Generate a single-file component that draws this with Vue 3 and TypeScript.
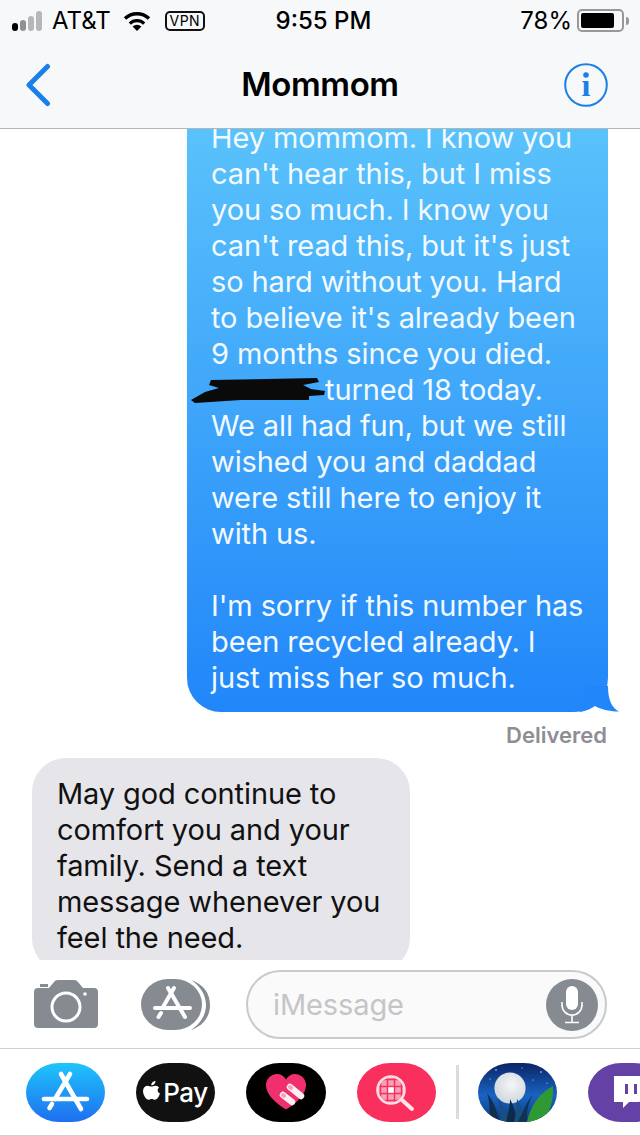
<script setup lang="ts">
const sentLines: string[] = [
  "Hey mommom. I know you",
  "can't hear this, but I miss",
  "you so much. I know you",
  "can't read this, but it's just",
  "so hard without you. Hard",
  "to believe it's already been",
  "9 months since you died.",
]
const sentAfter: string[] = [
  "We all had fun, but we still",
  "wished you and daddad",
  "were still here to enjoy it",
  "with us.",
  "\u00a0",
  "I'm sorry if this number has",
  "been recycled already. I",
  "just miss her so much.",
]
const receivedLines: string[] = [
  "May god continue to",
  "comfort you and your",
  "family. Send a text",
  "message whenever you",
  "feel the need.",
]
</script>

<template>
  <div class="phone">
    <header class="header">
      <div class="status">
        <div class="status-left">
          <div class="signal">
            <i class="b1"></i><i class="b2"></i><i class="b3"></i><i class="b4"></i>
          </div>
          <span class="carrier">AT&amp;T</span>
          <svg class="wifi" width="28" height="20" viewBox="0 0 28 20">
            <path d="M14 20l-4.400-4.600a6.400 6.400 0 0 1 8.800 0z" fill="#000" />
            <path d="M6.800 12.600a10.400 10.400 0 0 1 14.400 0" fill="none" stroke="#000" stroke-width="3.200" />
            <path d="M2 7.600a17.400 17.400 0 0 1 24 0" fill="none" stroke="#000" stroke-width="3.400" />
          </svg>
          <span class="vpn">VPN</span>
        </div>
        <span class="clock">9:55 PM</span>
        <div class="status-right">
          <span class="pct">78%</span>
          <div class="battery"><div class="charge"></div></div>
          <div class="nub"></div>
        </div>
      </div>
      <nav class="nav">
        <svg class="nav-back" width="26" height="44" viewBox="0 0 26 44">
          <path d="M22.500 3.500L4 22l18.500 18.500" fill="none" stroke="#1a7fe6" stroke-width="5" stroke-linecap="round" stroke-linejoin="round" />
        </svg>
        <h1 class="title">Mommom</h1>
        <svg class="nav-info" width="44" height="44" viewBox="0 0 44 44">
          <circle cx="22" cy="22" r="20.800" fill="none" stroke="#1a7fe6" stroke-width="2" />
          <circle cx="22" cy="12" r="2.800" fill="#1a7fe6" />
          <text x="22" y="33" text-anchor="middle" class="info-i">ı</text>
        </svg>
      </nav>
    </header>

    <main class="thread">
      <div class="sent">
        <div v-for="line in sentLines" :key="line" class="line">{{ line }}</div>
        <div class="line">
          <span class="redact">
            <svg width="135" height="27" viewBox="0 0 135 27">
              <path d="M20 3L126 1L128 5L112 8L120 12L134 14L133 18L118 19L118 23L50 23L4 26L0 23L14 15L28 11L18 8Z" fill="#0a0a0a" />
            </svg>
          </span>turned 18 today.
        </div>
        <div v-for="(line, i) in sentAfter" :key="i" class="line">{{ line }}</div>
        <svg class="tail" width="34" height="26" viewBox="0 0 34 26">
          <path d="M0 0H22C22 14 26 22 33 25.500C25 25.500 16 24 9 20C5 23 0 25 -6 26Z" fill="#2186f9" />
        </svg>
      </div>
      <div class="delivered">Delivered</div>
      <div class="received">
        <div v-for="line in receivedLines" :key="line" class="line">{{ line }}</div>
      </div>
    </main>

    <section class="composer">
      <svg class="camera" width="64" height="48" viewBox="0 0 64 48">
        <path d="M6 4h8v3H6z" fill="#868b92" />
        <path d="M4 8H15L20 2Q21 0 24 0H40Q43 0 44 2L49 8H60Q64 8 64 12V44Q64 48 60 48H4Q0 48 0 44V12Q0 8 4 8Z" fill="#868b92" />
        <circle cx="32" cy="27" r="14" fill="#868b92" stroke="#fff" stroke-width="3" />
        <circle cx="51" cy="14" r="1.800" fill="#fff" />
      </svg>
      <div class="store-btn">
        <svg width="70" height="54" viewBox="0 0 70 54">
          <path d="M50 2C62 6 69 15 69 27C69 39 62 48 50 52C58 47 65 38 65 27C65 16 58 7 50 2Z" fill="#868b92" />
          <rect x="0" y="1" width="61" height="51" rx="27" ry="25.500" fill="#868b92" />
          <g fill="none" stroke="#fff" stroke-width="4" stroke-linecap="round">
            <path d="M27 10L44 39" />
            <path d="M33 10L22 29" />
            <path d="M14 30H49" />
            <path d="M20 35L17.500 39" />
          </g>
        </svg>
      </div>
      <div class="input">
        <span class="placeholder">iMessage</span>
        <div class="mic">
          <svg width="24" height="38" viewBox="0 0 24 38">
            <rect x="6" y="0" width="12" height="24" rx="6" fill="#fff" />
            <path d="M2 16V19A10 10 0 0 0 22 19V16M12 29V36M5 36.500H19" fill="none" stroke="#fff" stroke-width="1.600" />
          </svg>
        </div>
      </div>
    </section>

    <section class="apps">
      <div class="app app-store">
        <svg width="79" height="59" viewBox="0 0 79 59">
          <g fill="none" stroke="#fff" stroke-width="4.600" stroke-linecap="round">
            <path d="M35 11L55 46" />
            <path d="M44 11L29 36" />
            <path d="M18 36H61" />
            <path d="M26 41L23.500 45" />
          </g>
        </svg>
      </div>
      <div class="app app-pay">
        <svg width="17" height="20" viewBox="0 0 17 20">
          <path d="M12.500 0C12.600 2.300 10.600 4.500 8.300 4.300C8.100 2.100 10.300 0.100 12.500 0ZM8.500 5.500C9.600 5.500 10.800 4.600 12.500 4.700C14 4.800 15.300 5.500 16.100 6.700C14 8 14.300 11.300 17 12.400C16.300 14.500 14.500 18 12.700 18.600C11.200 19 10.400 17.900 8.700 17.900C7 17.900 6.200 19 4.800 18.600C2.500 17.800 0 13.500 0 10C0 6.800 2 4.800 4.300 4.700C6 4.700 7.400 5.500 8.500 5.500Z" fill="#fff" />
        </svg>
        <span>Pay</span>
      </div>
      <div class="app app-heart">
        <svg width="40" height="36" viewBox="0 0 40 36">
          <path d="M20 35.500C8 28 0 20 0 11C0 5 5 0 11 0C15 0 18 2 20 5.500C22 2 25 0 29 0C35 0 40 5 40 11C40 20 32 28 20 35.500Z" fill="#f0306c" />
          <g stroke="#fdf0f4" stroke-width="6.500" stroke-linecap="round">
            <path d="M17 21L26 28" />
            <path d="M24 13L35 22" />
          </g>
          <g stroke="#f7a0ba" stroke-width="4" stroke-linecap="round">
            <path d="M17 21L18 21.800" />
            <path d="M24 13L25 13.800" />
          </g>
        </svg>
      </div>
      <div class="app app-search">
        <svg width="79" height="59" viewBox="0 0 79 59">
          <defs>
            <clipPath id="lens"><circle cx="34" cy="27" r="12.500" /></clipPath>
          </defs>
          <circle cx="34" cy="27" r="12.500" fill="#f8a0b5" />
          <g clip-path="url(#lens)" stroke="#f9305d" stroke-width="1.500" fill="none">
            <path d="M20 16.500H48M20 23.500H48M20 30.500H48M20 37.500H48" />
            <path d="M23.500 13V41M30.500 13V41M37.500 13V41M44.500 13V41" />
          </g>
          <path d="M31.300 24.300h5.400v5.400h-5.400z" fill="#fff" />
          <circle cx="34" cy="27" r="13.500" fill="none" stroke="#ffdde5" stroke-width="2.600" />
          <path d="M45 37L55 46" stroke="#ffe6ec" stroke-width="4" stroke-linecap="round" />
        </svg>
      </div>
      <div class="divider"></div>
      <div class="app app-moon">
        <svg width="79" height="59" viewBox="0 0 79 59">
          <defs>
            <linearGradient id="night" x1="0" y1="0" x2="0" y2="1">
              <stop offset="0" stop-color="#0a2466" />
              <stop offset=".55" stop-color="#1a63c2" />
              <stop offset="1" stop-color="#0d3a80" />
            </linearGradient>
            <radialGradient id="moonFill" cx=".55" cy=".4" r=".65">
              <stop offset="0" stop-color="#f5f6f6" />
              <stop offset="1" stop-color="#cdd5dc" />
            </radialGradient>
          </defs>
          <rect width="79" height="59" fill="url(#night)" />
          <g fill="#cfe2ff">
            <circle cx="18" cy="7" r=".8" />
            <circle cx="44" cy="5" r=".6" />
            <circle cx="63" cy="9" r=".8" />
            <circle cx="55" cy="17" r=".6" />
            <circle cx="12" cy="16" r=".6" />
            <circle cx="69" cy="20" r=".6" />
          </g>
          <circle cx="32" cy="25" r="15.600" fill="url(#moonFill)" />
          <path d="M49 59C52 44 60 31 75 23C76 36 72 50 64 59Z" fill="#2f9a35" />
          <path d="M0 42C5 47 9 52 12 59H0Z" fill="#2d8a36" />
          <path d="M9 30C15 38 20 48 21 59H11C12 49 12 39 9 30Z" fill="#102f4f" />
          <path d="M20 35C25 42 29 50 30 59H22C23 51 22 43 20 35Z" fill="#17507f" />
          <path d="M32 36C36 43 38 51 38 59H28C30 52 32 44 32 36Z" fill="#0d2a46" />
          <path d="M39 36C43 42 45 50 45 59H36C38 52 39 44 39 36Z" fill="#17507f" />
          <path d="M55 31C50 40 48 50 49 59H40C44 50 49 39 55 31Z" fill="#0f3350" />
        </svg>
      </div>
      <div class="app app-twitch">
        <svg width="34" height="32" viewBox="0 0 34 32">
          <path d="M2 0H34V22L27 26H17L11 32V26H2Z" fill="#fff" />
          <path d="M13 8h3v10h-3zM22 8h3v10h-3z" fill="#6441a4" />
        </svg>
      </div>
    </section>
  </div>
</template>

<style scoped>
.phone {
  width: 640px;
  height: 1136px;
  display: flex;
  flex-direction: column;
  overflow: hidden;
  background: #fff;
  font-family: Inter, "Liberation Sans", sans-serif;
  color: #000;
}
.header {
  height: 129px;
  flex: none;
  box-sizing: border-box;
  background: #f7f8f9;
  border-bottom: 1px solid #b4b4b6;
}
.status {
  height: 41px;
  padding: 0 11px 0 12px;
  display: grid;
  grid-template-columns: 1fr auto 1fr;
  align-items: center;
  font-size: 24px;
  line-height: 41px;
}
.status-left {
  display: flex;
  align-items: center;
}
.signal {
  display: flex;
  align-items: flex-end;
  gap: 2px;
  height: 20px;
}
.signal i {
  width: 6px;
  display: block;
  border-radius: 3px;
  background: #b5b7b9;
}
.b1 { height: 8px; background: #000 !important; }
.b2 { height: 11px; background: #8f9193 !important; }
.b3 { height: 15px; }
.b4 { height: 20px; }
.carrier {
  margin-left: 10px;
}
.wifi { margin-left: 12px; }
.vpn {
  margin-left: 14px;
  width: 40px;
  height: 20px;
  box-sizing: border-box;
  border: 2px solid #111;
  border-radius: 5px;
  font-size: 14px;
  line-height: 16px;
  text-align: center;
  letter-spacing: 0.4px;
}
.clock {
  font-weight: 500;
  font-size: 24px;
  margin-left: 6px;
}
.status-right {
  display: flex;
  align-items: center;
  justify-content: flex-end;
}
.pct { margin-right: 5px; }
.battery {
  width: 47px;
  height: 23px;
  box-sizing: border-box;
  border: 2px solid #98989a;
  border-radius: 5px;
  padding: 2px;
}
.charge {
  width: 33px;
  height: 100%;
  background: #000;
  border-radius: 2px;
}
.nub {
  width: 3px;
  height: 8px;
  margin-left: 2px;
  background: #98989a;
  border-radius: 0 3px 3px 0;
}
.nav {
  height: 87px;
  padding: 0 32px 0 25px;
  display: grid;
  grid-template-columns: 1fr auto 1fr;
  align-items: center;
}
.nav-info { justify-self: end; }
.title {
  margin: 0 0 2px 7px;
  font-size: 33px;
  font-weight: 600;
  letter-spacing: -0.4px;
}
.info-i {
  font-family: "Liberation Serif", serif;
  font-size: 32px;
  font-weight: 700;
  fill: #1a7fe6;
}
.thread {
  flex: 1;
  min-height: 0;
  overflow: hidden;
  display: flex;
  flex-direction: column;
  font-size: 29px;
  letter-spacing: -0.1px;
  line-height: 36px;
}
.line { white-space: nowrap; }
.sent {
  align-self: flex-end;
  position: relative;
  flex: none;
  margin: -27px 32px 0 0;
  width: 421px;
  box-sizing: border-box;
  padding: 18px 0 16px 24px;
  border-radius: 0 0 34px 34px;
  background: linear-gradient(180deg, #5cc5fb 0%, #2186f9 100%);
  color: #f2f9ff;
}
.redact {
  display: inline-block;
  position: relative;
  width: 114px;
  height: 1px;
}
.redact svg {
  position: absolute;
  left: -20px;
  top: -22px;
}
.tail {
  position: absolute;
  right: -12px;
  bottom: 0;
  overflow: visible;
}
.delivered {
  flex: none;
  align-self: flex-end;
  margin: 10px 33px 0 0;
  font-size: 22px;
  line-height: 26px;
  letter-spacing: 0;
  font-weight: 600;
  color: #8e8e93;
}
.received {
  flex: none;
  align-self: flex-start;
  margin: 10px 0 0 32px;
  width: 378px;
  box-sizing: border-box;
  padding: 18px 0 16px 25px;
  border-radius: 34px;
  background: #e5e5ea;
  color: #111;
}
.composer {
  height: 89px;
  flex: none;
  box-sizing: border-box;
  border-bottom: 1px solid #d0d0d2;
  display: flex;
  align-items: flex-start;
  padding: 10px 33px 0 34px;
}
.camera { margin-top: 10px; }
.store-btn {
  margin: 8px 0 0 43px;
  height: 54px;
}
.input {
  margin-left: 35px;
  flex: 1;
  height: 69px;
  box-sizing: border-box;
  border: 2px solid #c9cacb;
  border-radius: 35px;
  background: #fafafa;
  display: flex;
  align-items: center;
  justify-content: space-between;
  padding: 0 7px 0 25px;
}
.placeholder {
  font-size: 29px;
  color: #c4c5c8;
  letter-spacing: -0.1px;
}
.mic {
  width: 52px;
  height: 52px;
  border-radius: 50%;
  background: #868b92;
  display: flex;
  align-items: center;
  justify-content: center;
}
.apps {
  height: 87px;
  flex: none;
  box-sizing: border-box;
  border-bottom: 1px solid #d0d0d2;
  display: flex;
  align-items: center;
  gap: 31px;
  padding: 0 0 0 26px;
}
.app {
  flex: none;
  width: 79px;
  height: 59px;
  border-radius: 42% / 50%;
  overflow: hidden;
  display: flex;
  align-items: center;
  justify-content: center;
}
.app-store { background: linear-gradient(180deg, #1fc4fb, #1e6ff0); }
.app-pay {
  background: #111;
  color: #fff;
  gap: 3px;
  font-size: 26px;
  font-weight: 500;
  letter-spacing: -0.5px;
}
.app-pay svg { margin-bottom: 2px; }
.app-heart { background: #000; width: 80px; }
.app-search { background: #f9305d; }
.divider {
  flex: none;
  width: 3px;
  height: 54px;
  margin: 0 -12px 0 -11px;
  background: #dcdcde;
}
.app-twitch {
  background: #6441a4;
  justify-content: flex-start;
  padding-left: 24px;
  box-sizing: border-box;
}
</style>
